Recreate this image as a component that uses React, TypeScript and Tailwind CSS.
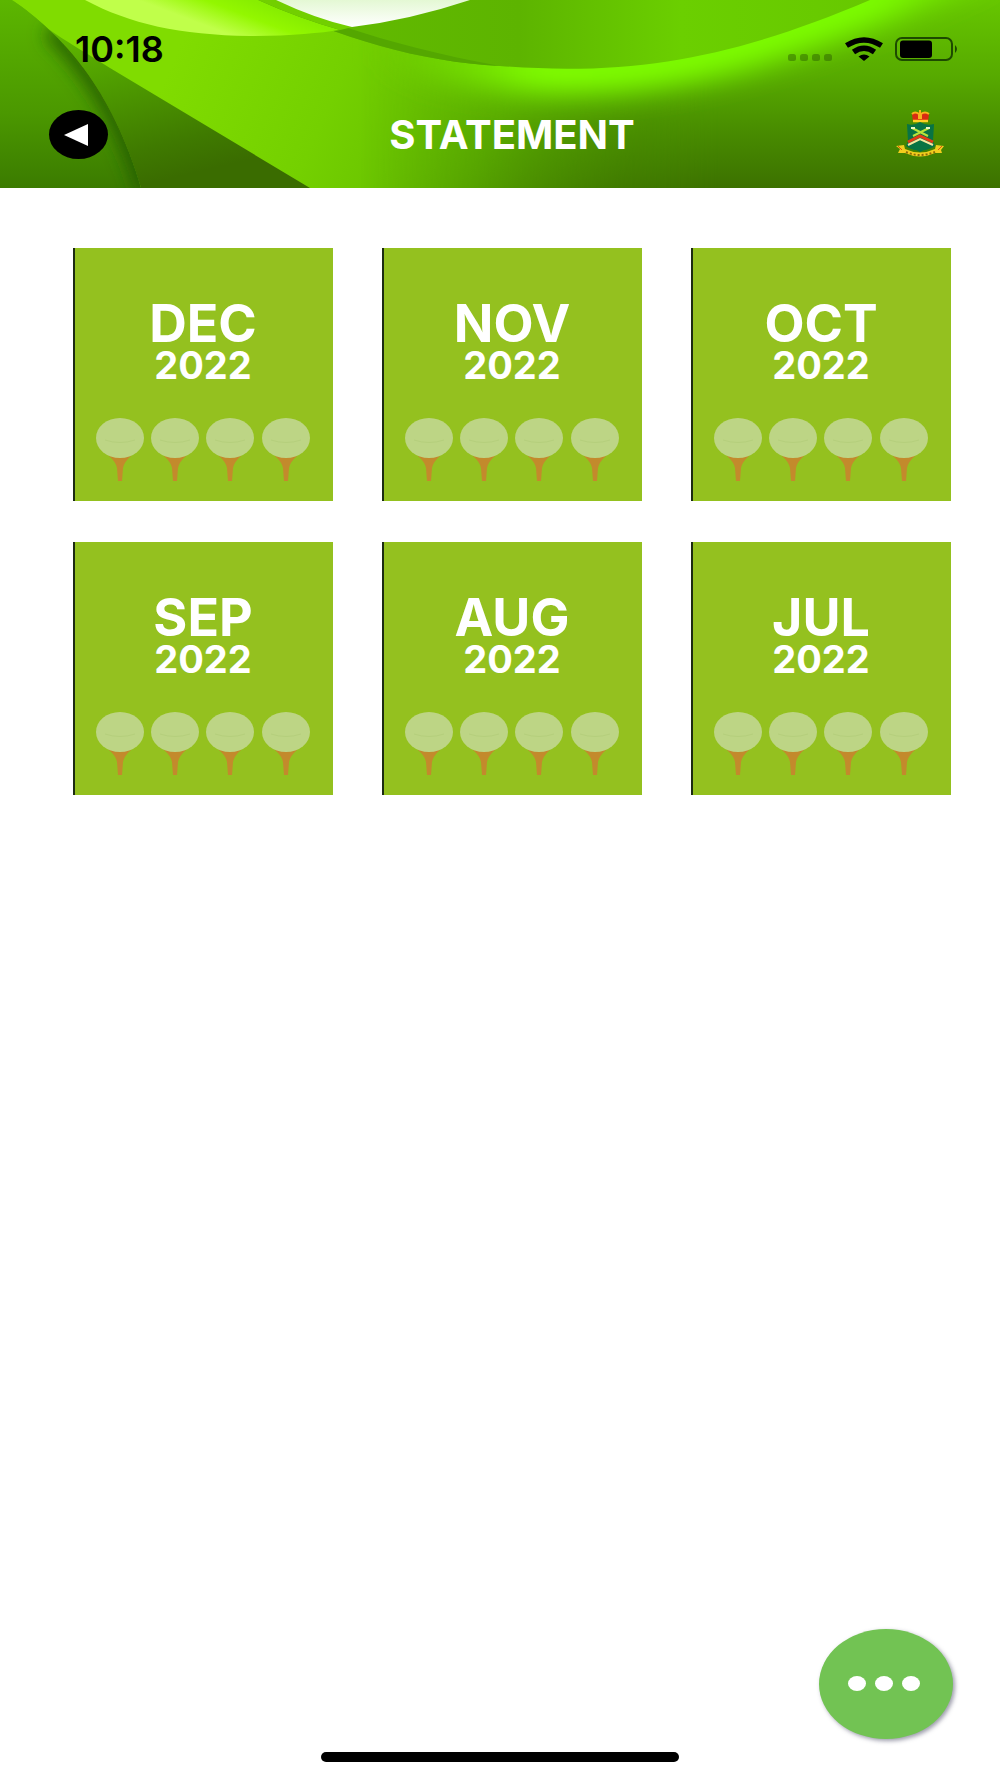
interface Statement {
  month: string;
  year: number;
}

const statements: Statement[] = [
  { month: "DEC", year: 2022 },
  { month: "NOV", year: 2022 },
  { month: "OCT", year: 2022 },
  { month: "SEP", year: 2022 },
  { month: "AUG", year: 2022 },
  { month: "JUL", year: 2022 },
];

function HeaderBackdrop() {
  return (
    <svg
      viewBox="0 0 1000 188"
      preserveAspectRatio="none"
      aria-hidden="true"
      className="absolute inset-0 -z-10 h-full w-full"
    >
      <defs>
        <linearGradient id="sweep" gradientUnits="userSpaceOnUse" x1="200" y1="0" x2="620" y2="188">
          <stop offset="0" stopColor="#80dc00" />
          <stop offset="0.35" stopColor="#74d000" />
          <stop offset="0.7" stopColor="#62ba00" />
          <stop offset="1" stopColor="#4d9400" />
        </linearGradient>
        <linearGradient id="shade" x1="0" y1="0" x2="0" y2="1">
          <stop offset="0" stopColor="#66c600" />
          <stop offset="0.4" stopColor="#57aa00" />
          <stop offset="0.7" stopColor="#488c00" />
          <stop offset="1" stopColor="#3c7100" />
        </linearGradient>
        <linearGradient id="shadeFade" x1="0" y1="0" x2="1" y2="0">
          <stop offset="0.36" stopColor="#fff" stopOpacity="0" />
          <stop offset="0.72" stopColor="#fff" />
        </linearGradient>
        <mask id="shadeMask">
          <rect width="1000" height="188" fill="url(#shadeFade)" />
        </mask>
        <linearGradient id="fold" gradientUnits="userSpaceOnUse" x1="90" y1="20" x2="130" y2="188">
          <stop offset="0" stopColor="#62ba00" />
          <stop offset="0.35" stopColor="#509f00" />
          <stop offset="0.8" stopColor="#3f7a00" />
          <stop offset="1" stopColor="#3a6c00" />
        </linearGradient>
        <linearGradient id="leaf" x1="0" y1="0" x2="0" y2="1">
          <stop offset="0" stopColor="#5cb600" />
          <stop offset="0.6" stopColor="#4b9800" />
          <stop offset="1" stopColor="#3b7b00" />
        </linearGradient>
        <linearGradient id="pool" gradientUnits="userSpaceOnUse" x1="330" y1="0" x2="870" y2="0">
          <stop offset="0" stopColor="#62ba00" />
          <stop offset="0.35" stopColor="#5db400" />
          <stop offset="0.65" stopColor="#6bcf00" />
          <stop offset="1" stopColor="#67c800" />
        </linearGradient>
        <linearGradient id="lens" gradientUnits="userSpaceOnUse" x1="250" y1="0" x2="236" y2="37">
          <stop offset="0" stopColor="#88ee00" />
          <stop offset="0.4" stopColor="#93f700" />
          <stop offset="1" stopColor="#c0ff4a" />
        </linearGradient>
        <linearGradient id="pearl" x1="0" y1="0" x2="0" y2="1">
          <stop offset="0" stopColor="#e4f8d4" />
          <stop offset="1" stopColor="#ffffff" />
        </linearGradient>
        <filter id="glow" filterUnits="userSpaceOnUse" x="200" y="-120" width="1000" height="360">
          <feGaussianBlur stdDeviation="18 14" />
        </filter>
        <filter id="soft" filterUnits="userSpaceOnUse" x="-60" y="-60" width="320" height="320">
          <feGaussianBlur stdDeviation="9" />
        </filter>
        <linearGradient id="rim" gradientUnits="userSpaceOnUse" x1="380" y1="0" x2="1000" y2="0">
          <stop offset="0" stopColor="#7fee00" stopOpacity="0" />
          <stop offset="0.25" stopColor="#80ff00" />
          <stop offset="0.8" stopColor="#7dff00" />
          <stop offset="1" stopColor="#78f000" stopOpacity="0.5" />
        </linearGradient>
        <clipPath id="leafClip">
          <path d="M0 0H12C62 34 112 88 141 188H0Z" />
        </clipPath>
      </defs>

      <rect width="1000" height="188" fill="url(#sweep)" />
      <rect width="1000" height="188" fill="url(#shade)" mask="url(#shadeMask)" />

      {/* bright rim and the pool above it */}
      <path
        d="M340 20C420 60 460 64 540 70C660 76 760 52 980 -44"
        fill="none"
        stroke="url(#rim)"
        strokeWidth="46"
        filter="url(#glow)"
      />
      <path d="M258 0C340 38 420 62 500 66C640 77 740 55 870 0Z" fill="url(#pool)" />
      <path d="M258 0C340 38 420 62 500 66C440 55 390 42 345 27L276 0Z" fill="#54a700" />

      {/* lens in the top left */}
      <path d="M85 0C130 24 180 35 250 36C290 36 320 33 340 30Q298 18 258 0Z" fill="url(#lens)" />
      <path d="M258 0Q298 18 340 30L353 27L276 0Z" fill="#72cf00" />
      <path d="M276 0Q316 19 352 27Q410 20 470 0Z" fill="url(#pearl)" />

      {/* dark folds along the left edge */}
      <path d="M12 0C36 24 72 44 110 68L310 188H141C112 88 62 34 12 0Z" fill="url(#fold)" />
      <path d="M0 0H12C62 34 112 88 141 188H0Z" fill="url(#leaf)" />
      <g clipPath="url(#leafClip)">
        <path
          d="M50 30C80 58 120 108 147 194"
          fill="none"
          stroke="#225800"
          strokeWidth="16"
          filter="url(#soft)"
        />
      </g>
    </svg>
  );
}

function SignalDots() {
  return (
    <svg viewBox="0 0 46 24" className="h-6 w-[46px]" fill="#275900" fillOpacity="0.45" aria-hidden="true">
      <rect x="1" y="17" width="8" height="7" rx="2.5" />
      <rect x="13" y="17" width="8" height="7" rx="2.5" />
      <rect x="25" y="17" width="8" height="7" rx="2.5" />
      <rect x="37" y="17" width="8" height="7" rx="2.5" />
    </svg>
  );
}

function WifiIcon() {
  return (
    <svg viewBox="0 0 38 24" className="h-6 w-[38px]" aria-hidden="true">
      <g fill="none" stroke="#000" strokeWidth="5.4">
        <path d="M1.5 8.5Q19 -2.7 36.5 8.5" />
        <path d="M8.5 15Q19 7.5 29.5 15" />
      </g>
      <path d="M13.5 19.5Q19 15.5 24.5 19.5L19 24Z" />
    </svg>
  );
}

function BatteryIcon() {
  return (
    <svg viewBox="0 0 64 24" className="h-6 w-16" aria-hidden="true">
      <rect x="1" y="1" width="56" height="22" rx="6" fill="none" stroke="#1d4a00" strokeWidth="2" />
      <rect x="5" y="3.5" width="32" height="17.5" rx="3" />
      <path d="M60 8Q64 12 60 16Z" fill="#1d4a00" />
    </svg>
  );
}

function ClubCrest() {
  return (
    <svg viewBox="0 0 54 49" className="h-[49px] w-[54px]" role="img" aria-label="Club crest">
      {/* crown */}
      <path d="M20 4Q23 1 28 3Q33 1 37 4L36 12H21Z" fill="#d92b12" />
      <path d="M20 4Q23 1 27 4V9M37 4Q33 1 29 4V9M28 0V5" fill="none" stroke="#f5b41c" strokeWidth="2" />
      <path d="M21 11H36" stroke="#ffcf24" strokeWidth="2.5" />
      {/* shield */}
      <path d="M15 14Q22 16 28 12Q34 16 42 14L41 31L43 36Q36 41 28 40Q20 41 14 36L16 31Z" fill="#087344" />
      <path d="M20 18L36 26M37 18L21 26" stroke="#b9e33a" strokeWidth="2" />
      <path d="M19 18H23M34 18H38" stroke="#e9f5c4" strokeWidth="2" />
      <path d="M16 32L28 26L41 32" fill="none" stroke="#e33b16" strokeWidth="3" />
      <path d="M16 35L28 29L41 35" fill="none" stroke="#f3e7a0" strokeWidth="2" />
      <path d="M18 36L28 31L39 36L28 42Z" fill="#087344" />
      {/* scroll */}
      <path d="M4 36L12 35L13 39Q28 46 43 39L44 35L52 36L49 40L50 43L43 43Q28 50 13 43L6 43L8 39Z" fill="#f2cd1d" />
      <path d="M14 42Q28 48 43 42" fill="none" stroke="#8c6a08" strokeWidth="2" strokeDasharray="2 2" />
      <path d="M6 36L10 40M50 36L46 40" stroke="#d8560f" strokeWidth="1" />
    </svg>
  );
}

function GolfTees() {
  return (
    <svg viewBox="0 0 214 64" className="h-16 w-[214px]" aria-hidden="true">
      {[24, 79, 134, 190].map((x) => (
        <g key={x} transform={`translate(${x} 0)`}>
          <path d="M-11 38H11Q4 44 3 50L2 63H-2L-3 50Q-4 44 -11 38Z" fill="#c38a2c" />
          <ellipse cx="0" cy="20" rx="24" ry="20" fill="#bdd585" />
          <path d="M-15 22Q0 27 15 22" fill="none" stroke="#b5cf7c" strokeWidth="1" />
        </g>
      ))}
    </svg>
  );
}

function StatementCard({ month, year }: Statement) {
  return (
    <button
      type="button"
      className="flex flex-col items-center border-l-2 border-[#1c2b12] bg-[#94c11f] pt-[50px] pr-0.5 pb-[19px] text-white"
    >
      <span className="text-[52px] leading-[52px] font-bold">{month}</span>
      <span className="text-[38px] leading-[30px] font-bold">{year}</span>
      <span className="mt-[38px]">
        <GolfTees />
      </span>
    </button>
  );
}

export default function App() {
  return (
    <div className="flex min-h-screen flex-col bg-white font-['Inter','Liberation_Sans',sans-serif]">
      <header className="relative isolate overflow-hidden pt-[29px] pb-[29px]">
        <HeaderBackdrop />

        <div className="flex h-10 items-center justify-between pr-[41px] pl-[75px]">
          <span className="text-[36px] leading-10 font-semibold text-black">10:18</span>
          <div className="flex items-center gap-3">
            <SignalDots />
            <WifiIcon />
            <BatteryIcon />
          </div>
        </div>

        <div className="mt-[41px] flex items-center pr-[54px] pl-[49px]">
          <button
            type="button"
            aria-label="Back"
            className="flex h-[49px] w-[59px] items-center justify-center rounded-[50%] bg-black pr-1.5"
          >
            <svg viewBox="0 0 24 22" className="h-[22px] w-6" fill="#fff" aria-hidden="true">
              <path d="M0 11L24 0V22Z" />
            </svg>
          </button>
          <h1 className="flex-1 pl-6 text-center text-[40px] leading-[49px] font-bold text-white">STATEMENT</h1>
          <ClubCrest />
        </div>
      </header>

      <main className="grid flex-1 grid-cols-3 content-start gap-x-[49px] gap-y-[41px] pt-[60px] pr-[49px] pl-[73px]">
        {statements.map((s) => (
          <StatementCard key={s.month} month={s.month} year={s.year} />
        ))}
      </main>

      <button
        type="button"
        aria-label="More options"
        className="fixed right-[47px] bottom-[39px] flex h-[110px] w-[134px] items-center justify-center gap-[9px] rounded-[50%] bg-[#72c353] pr-1 pb-0.5 shadow-[2px_2px_4px_rgba(60,60,90,0.5)]"
      >
        <span className="h-[15px] w-[18px] rounded-[50%] bg-white" />
        <span className="h-[15px] w-[18px] rounded-[50%] bg-white" />
        <span className="h-[15px] w-[18px] rounded-[50%] bg-white" />
      </button>

      <footer className="flex justify-center pb-4">
        <div className="h-[10px] w-[358px] rounded-full bg-black" />
      </footer>
    </div>
  );
}
